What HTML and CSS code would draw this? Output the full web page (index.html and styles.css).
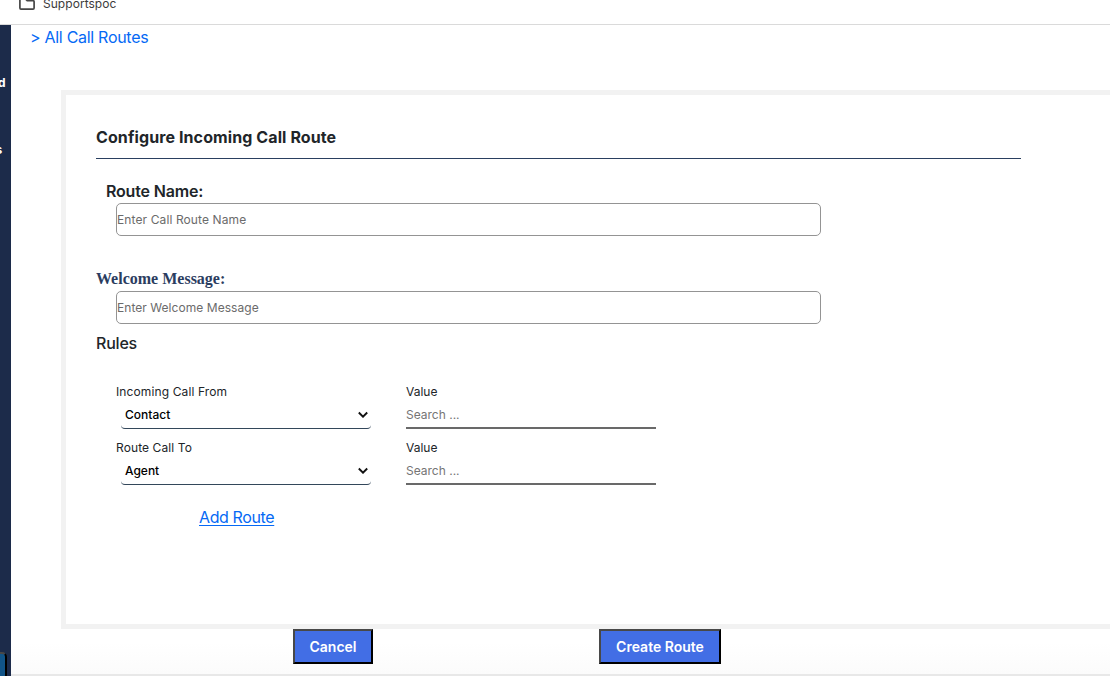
FILE: index.html
```
<!DOCTYPE html>
<html lang="en">
<head>
<meta charset="utf-8">
<title>Configure Incoming Call Route</title>
<link rel="stylesheet" href="styles.css">
</head>
<body>
<header class="bookmarks">
  <svg class="folder" width="18" height="12" viewBox="0 0 18 12" fill="none" stroke="#474747" stroke-width="1.7"><path d="M1.9 -3V8q0 1.100 1.100 1.100H15q1.100 0 1.100-1.100V1.700q0-1.100-1.100-1.100H9.200L6.500-2"/></svg>
  <span class="bookmark-name">Supportspoc</span>
</header>
<div class="shell">
  <aside class="sidebar">
    <span class="nav-tail nav-first">d</span>
    <span class="nav-tail nav-second">s</span>
    <span class="side-button"></span>
  </aside>
  <main class="page">
    <a class="back"><span class="t-back">&gt; All Call Routes</span></a>
    <section class="panel">
      <h1 class="title"><span class="t-title">Configure Incoming Call Route</span></h1>
      <label class="label route-label"><span class="t-route">Route Name:</span></label>
      <div class="field"><span class="t-ph1">Enter Call Route Name</span></div>
      <label class="label welcome-label"><span>Welcome Message:</span></label>
      <div class="field"><span class="t-ph2">Enter Welcome Message</span></div>
      <h2 class="rules"><span class="t-rules">Rules</span></h2>
      <div class="rule-grid">
        <div class="rule">
          <span class="small-label t-from">Incoming Call From</span>
          <div class="select"><span class="t-contact">Contact</span><svg width="10" height="7" viewBox="0 0 10 7" fill="none" stroke="#111" stroke-width="1.900"><path d="M.8 1.500 5 5.700 9.200 1.500"/></svg></div>
        </div>
        <div class="rule">
          <span class="small-label t-value">Value</span>
          <div class="search"><span class="t-search">Search ...</span></div>
        </div>
        <div class="rule">
          <span class="small-label t-to">Route Call To</span>
          <div class="select"><span class="t-agent">Agent</span><svg width="10" height="7" viewBox="0 0 10 7" fill="none" stroke="#111" stroke-width="1.900"><path d="M.8 1.500 5 5.700 9.200 1.500"/></svg></div>
        </div>
        <div class="rule">
          <span class="small-label t-value">Value</span>
          <div class="search"><span class="t-search">Search ...</span></div>
        </div>
      </div>
      <a class="add"><span class="t-add">Add Route</span></a>
    </section>
    <div class="actions">
      <button class="btn cancel"><span class="t-cancel">Cancel</span></button>
      <button class="btn create"><span class="t-create">Create Route</span></button>
    </div>
    <div class="page-end"></div>
  </main>
</div>
</body>
</html>
```
FILE: styles.css
```
* { box-sizing: border-box; }
body { margin: 0; width: 1110px; height: 676px; overflow: hidden; background: #fff; color: #212529; font: 16px/24px Inter, sans-serif; }
span { white-space: nowrap; }
.bookmarks { height: 25px; border-bottom: 1px solid #dadada; display: flex; padding-left: 18px; color: #3c3c3c; }
.folder { flex: none; margin-right: 7px; }
.bookmark-name { font-size: 12px; line-height: 16px; margin-top: -4px; letter-spacing: .04px; }
.shell { display: flex; height: 651px; }
.sidebar { width: 11px; flex: none; background: #1c2b4a; overflow: hidden; display: flex; flex-direction: column; align-items: flex-start; color: #fff; font-size: 12px; font-weight: 700; line-height: 20px; }
.nav-tail { width: 5.5px; display: flex; justify-content: flex-end; }
.nav-first { margin-top: 48px; }
.nav-second { width: 2.3px; margin-top: 47px; }
.side-button { width: 20px; height: 34px; margin: 492px 0 0 -13px; flex: none; border: 2px solid #000; border-top-color: #484848; border-radius: 5px; background: #115488; }
.page { width: 1099px; flex: none; overflow: hidden; display: flex; flex-direction: column; }
.back { height: 24px; padding-left: 19px; color: #0569f5; display: block; }
.t-back { letter-spacing: -.29px; }
.panel { margin: 41px 0 0 50px; width: 1060px; height: 539px; flex: none; border: 5px solid #f2f2f2; padding: 30px 30px 0; }
.title { font-size: 16px; line-height: 24px; font-weight: 700; margin: 0; width: 925px; height: 34px; border-bottom: 1px solid #2a3f60; }
.t-title { letter-spacing: .1px; }
.label { display: block; height: 24px; }
.route-label { margin: 20px 0 0 10px; font-weight: 600; }
.t-route { letter-spacing: -.18px; }
.welcome-label { margin-top: 31px; font-family: "Liberation Serif", serif; font-weight: 700; color: #2b3d5f; }
.field { width: 705px; height: 33px; margin-left: 20px; border: 1px solid #949494; border-radius: 5px; font-size: 12px; line-height: 31px; color: #6b6b6b; }
.t-ph1 { letter-spacing: .11px; }
.t-ph2 { letter-spacing: .05px; }
.rules { margin: 7px 0 0; font-size: 16px; line-height: 24px; font-weight: 500; }
.t-rules { letter-spacing: -.2px; }
.rule-grid { display: grid; grid-template-columns: 290px 250px; row-gap: 10px; margin: 28px 0 0 20px; font-size: 12px; }
.rule { display: flex; flex-direction: column; height: 46px; }
.small-label { line-height: 18px; height: 18px; }
.t-from { letter-spacing: .12px; }
.t-to { letter-spacing: .1px; }
.select { margin-left: 5px; width: 250px; height: 28px; border-bottom: 1px solid #33475a; border-radius: 4px; padding: 0 3px 0 4px; display: flex; align-items: center; justify-content: space-between; color: #000; font-weight: 500; }
.search { height: 28px; border-bottom: 2px solid #696969; line-height: 28px; color: #757575; }
.add { display: block; margin: 20px 0 0 103px; color: #0569f5; text-decoration: underline; text-underline-offset: 2px; text-decoration-thickness: 1px; }
.t-add { letter-spacing: -.38px; }
.actions { display: flex; padding-left: 282px; gap: 226px; height: 45px; flex: none; background: linear-gradient(#fff 30%, #fbfbfb); }
.btn { height: 35px; padding: 0; border: 2px solid; border-color: #484848 #000 #000 #484848; background: #426ee5; color: #fff; font: 600 14px/31px Inter, sans-serif; }
.cancel { width: 80px; }
.create { width: 122px; }
.page-end { height: 2px; background: #e8e8e8; flex: none; }
```
